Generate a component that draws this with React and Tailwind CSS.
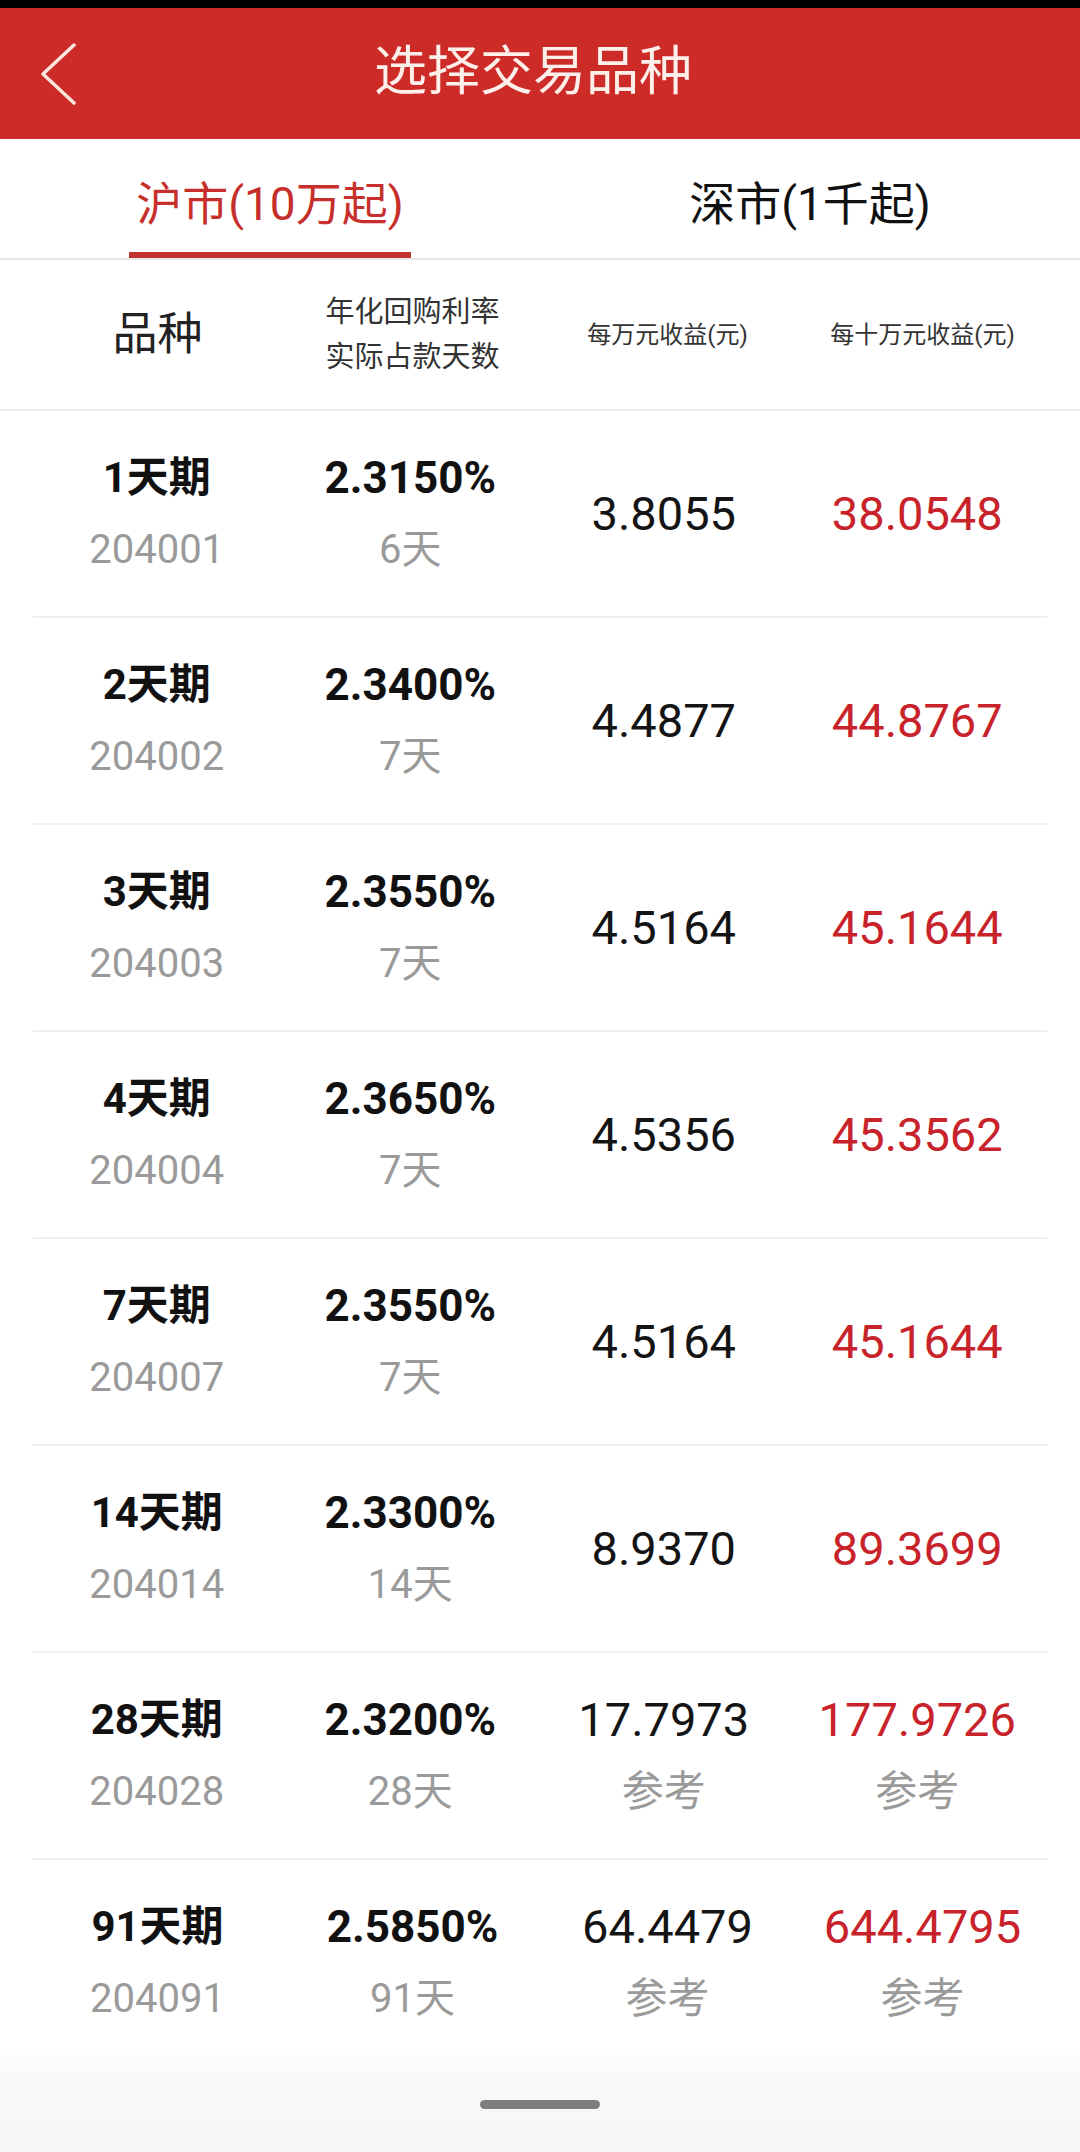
import React from 'react'

const rows = [
  { name: '1天期', code: '204001', rate: '2.3150%', days: '6天', per10k: '3.8055', per100k: '38.0548' },
  { name: '2天期', code: '204002', rate: '2.3400%', days: '7天', per10k: '4.4877', per100k: '44.8767' },
  { name: '3天期', code: '204003', rate: '2.3550%', days: '7天', per10k: '4.5164', per100k: '45.1644' },
  { name: '4天期', code: '204004', rate: '2.3650%', days: '7天', per10k: '4.5356', per100k: '45.3562' },
  { name: '7天期', code: '204007', rate: '2.3550%', days: '7天', per10k: '4.5164', per100k: '45.1644' },
  { name: '14天期', code: '204014', rate: '2.3300%', days: '14天', per10k: '8.9370', per100k: '89.3699' },
  { name: '28天期', code: '204028', rate: '2.3200%', days: '28天', per10k: '17.7973', per100k: '177.9726', ref: true },
  { name: '91天期', code: '204091', rate: '2.5850%', days: '91天', per10k: '64.4479', per100k: '644.4795', ref: true },
]

function Row({ row, last }) {
  return (
    <div className={last ? 'h-[195px] pt-[10px] flex items-center' : 'h-[207px] flex items-center border-b-2 border-[#efefef] mx-[33px]'}>
      <div className={`grid grid-cols-4 w-full ${last ? 'px-[30px]' : 'px-0 -mx-[3px]'}`}>
        <div className="flex flex-col items-center">
          <div className="text-[42px] leading-[72px] font-bold text-[#111]">{row.name}</div>
          <div className="text-[40px] leading-[72px] text-[#9a9a9a]">{row.code}</div>
        </div>
        <div className="flex flex-col items-center">
          <div className="text-[44px] leading-[72px] font-bold text-[#111]">{row.rate}</div>
          <div className="text-[40px] leading-[72px] text-[#9a9a9a]">{row.days}</div>
        </div>
        <div className="flex flex-col items-center justify-center">
          <div className="text-[47px] leading-[72px] text-[#141414]">{row.per10k}</div>
          {row.ref && <div className="text-[42px] leading-[72px] text-[#9a9a9a]">参考</div>}
        </div>
        <div className="flex flex-col items-center justify-center">
          <div className="text-[47px] leading-[72px] text-[#c8232b]">{row.per100k}</div>
          {row.ref && <div className="text-[42px] leading-[72px] text-[#9a9a9a]">参考</div>}
        </div>
      </div>
    </div>
  )
}

export default function App() {
  return (
    <div className="w-[1080px] h-[2152px] overflow-hidden bg-white font-[Roboto,'Noto_Sans_CJK_SC',sans-serif] flex flex-col">
      <div className="h-[8px] bg-black" />
      <div className="h-[131px] bg-[#cd2b27] flex items-center">
        <div className="w-[160px] pl-[40px] flex items-center">
          <svg width="36" height="62" viewBox="0 0 36 62" fill="none">
            <path d="M34 2 L3 31 L34 60" stroke="#fbe6dd" strokeWidth="3.5" strokeLinecap="round" strokeLinejoin="round" />
          </svg>
        </div>
        <div className="flex-1 text-center text-[53px] leading-[60px] text-[#fdefea] pr-[14px] pb-[4px]">选择交易品种</div>
        <div className="w-[160px]" />
      </div>

      <div className="h-[121px] border-b-2 border-[#e8e8e8] grid grid-cols-2">
        <div className="flex flex-col items-center justify-end">
          <div className="text-[46px] leading-[60px] text-[#c62f2c]">沪市(10万起)</div>
          <div className="mt-[18px] h-[6px] w-[282px] bg-[#c0332f]" />
        </div>
        <div className="flex flex-col items-center justify-end">
          <div className="text-[46px] leading-[60px] text-[#111]">深市(1千起)</div>
          <div className="mt-[18px] h-[6px]" />
        </div>
      </div>

      <div className="h-[151px] border-b-2 border-[#eeeeee] px-[30px] grid grid-cols-4 items-center">
        <div className="text-center text-[45px] leading-[56px] text-[#222]">品种</div>
        <div className="flex flex-col items-center text-[29px] leading-[45px] text-[#333]">
          <div>年化回购利率</div>
          <div>实际占款天数</div>
        </div>
        <div className="text-center text-[24px] leading-[40px] text-[#333]">每万元收益(元)</div>
        <div className="text-center text-[24px] leading-[40px] text-[#333]">每十万元收益(元)</div>
      </div>

      {rows.map((r, i) => (
        <Row key={r.code} row={r} last={i === rows.length - 1} />
      ))}

      <div className="flex-1 bg-gradient-to-b from-[#fbfbfb] to-[#f5f6f8] flex justify-center pt-[45px]">
        <div className="w-[120px] h-[9px] rounded-full bg-[#7e7e7e]" />
      </div>
    </div>
  )
}
